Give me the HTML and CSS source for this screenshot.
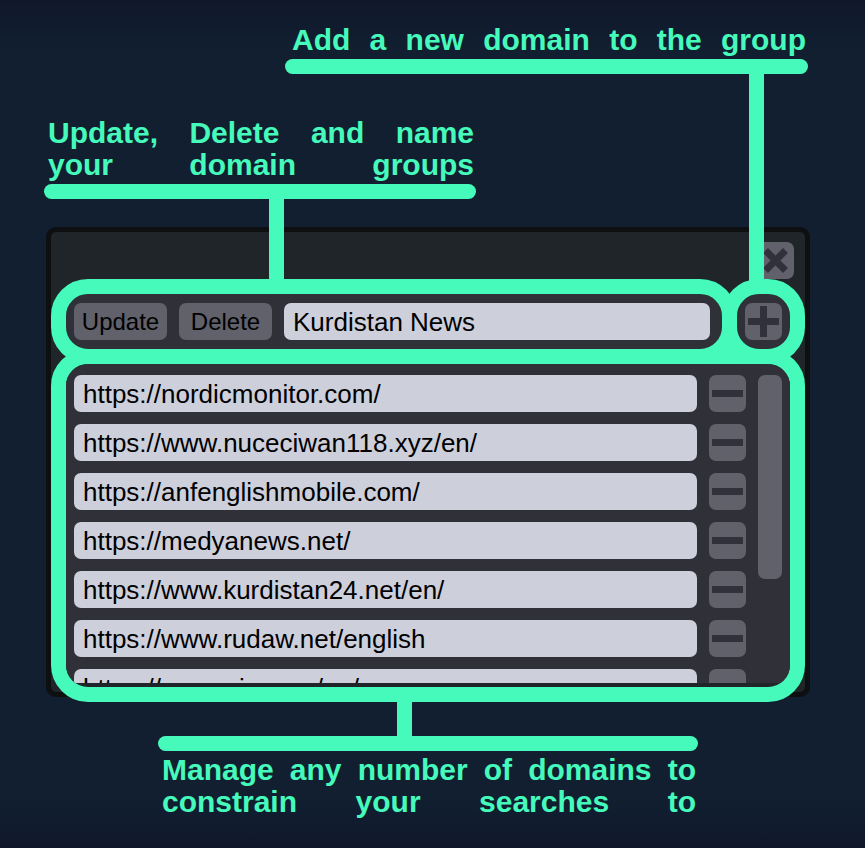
FILE: index.html
```html
<!DOCTYPE html>
<html lang="en">
<head>
<meta charset="utf-8">
<title>Domain groups</title>
<link rel="stylesheet" href="styles.css">
</head>
<body>
<main class="page">
  <section class="callout callout-add">
    <p class="callout-text">Add a new domain to the group</p>
    <div class="bar"></div>
  </section>
  <section class="callout callout-group">
    <p class="callout-text">Update, Delete and name<br>your domain groups</p>
    <div class="bar"></div>
  </section>

  <form class="panel">
    <header class="panel-head">
      <button class="icon-button" type="button" aria-label="Close"><svg viewBox="0 0 37 37"><path d="M8.500 8.500L28.500 28.500M28.500 8.500L8.500 28.500"/></svg></button>
    </header>
    <div class="group-row">
      <div class="ring group-controls">
        <button class="text-button" type="button">Update</button>
        <button class="text-button" type="button">Delete</button>
        <input class="field" type="text" aria-label="Group name" value="Kurdistan News">
      </div>
      <div class="ring add-control">
        <button class="icon-button" type="button" aria-label="Add domain"><svg viewBox="0 0 37 37"><path d="M3 18.500H34M18.500 3V34"/></svg></button>
      </div>
    </div>
    <div class="ring domains">
      <div class="scroller">
        <ul class="list">
          <li class="row"><input class="field" type="text" aria-label="Domain 1" value="https://nordicmonitor.com/"><button class="icon-button" type="button" aria-label="Remove domain 1"><svg viewBox="0 0 37 37"><path d="M3 18.500H34"/></svg></button></li>
          <li class="row"><input class="field" type="text" aria-label="Domain 2" value="https://www.nuceciwan118.xyz/en/"><button class="icon-button" type="button" aria-label="Remove domain 2"><svg viewBox="0 0 37 37"><path d="M3 18.500H34"/></svg></button></li>
          <li class="row"><input class="field" type="text" aria-label="Domain 3" value="https://anfenglishmobile.com/"><button class="icon-button" type="button" aria-label="Remove domain 3"><svg viewBox="0 0 37 37"><path d="M3 18.500H34"/></svg></button></li>
          <li class="row"><input class="field" type="text" aria-label="Domain 4" value="https://medyanews.net/"><button class="icon-button" type="button" aria-label="Remove domain 4"><svg viewBox="0 0 37 37"><path d="M3 18.500H34"/></svg></button></li>
          <li class="row"><input class="field" type="text" aria-label="Domain 5" value="https://www.kurdistan24.net/en/"><button class="icon-button" type="button" aria-label="Remove domain 5"><svg viewBox="0 0 37 37"><path d="M3 18.500H34"/></svg></button></li>
          <li class="row"><input class="field" type="text" aria-label="Domain 6" value="https://www.rudaw.net/english"><button class="icon-button" type="button" aria-label="Remove domain 6"><svg viewBox="0 0 37 37"><path d="M3 18.500H34"/></svg></button></li>
          <li class="row"><input class="field" type="text" aria-label="Domain 7" value="https://npasyria.com/en/"><button class="icon-button" type="button" aria-label="Remove domain 7"><svg viewBox="0 0 37 37"><path d="M3 18.500H34"/></svg></button></li>
        </ul>
        <div class="thumb"></div>
      </div>
    </div>
  </form>

  <section class="callout callout-domains">
    <div class="bar"></div>
    <p class="callout-text">Manage any number of domains to<br>constrain your searches to</p>
  </section>
</main>
</body>
</html>
```
FILE: styles.css
```css
:root {
  --accent: #45fabb;
  --surface: #303038;
  --panel: #1f2529;
  --control: #61616c;
  --glyph: #31313c;
  --field: #cdcfdb;
}

* { box-sizing: border-box; }

body {
  margin: 0;
  min-height: 100vh;
  font-family: "Liberation Sans", Arial, sans-serif;
  background:
    linear-gradient(#10172b, transparent 50px),
    linear-gradient(to top, #10172b, transparent 50px),
    #111f31;
}

.page {
  display: flex;
  flex-direction: column;
  padding: 24px 55px 24px 46px;
}

/* Callouts */
.callout {
  position: relative;
  z-index: 1;
  display: flex;
  flex-direction: column;
  gap: 3px;
}

.callout-text {
  margin: 0;
  padding: 0 2px 0 4px;
  color: var(--accent);
  font-size: 30px;
  font-weight: bold;
  line-height: 32px;
  text-align: justify;
  text-align-last: justify;
}

.bar {
  height: 15px;
  border-radius: 8px;
  background: var(--accent);
}

/* Stem joining a callout's bar to the ring it describes */
.callout::after {
  content: "";
  position: absolute;
  top: 100%;
  width: 15px;
  background: var(--accent);
}

.callout-add { margin: 0 2px 0 239px; }
.callout-add .callout-text { padding-left: 7px; }
.callout-add::after { right: 44px; height: 208px; }

.callout-group {
  width: 432px;
  margin: 43px 0 28px -2px;
}
.callout-group::after { left: 225px; height: 84px; }

.callout-domains {
  width: 540px;
  margin-top: 39px;
  align-self: center;
}
.callout-domains::after { top: auto; bottom: 100%; left: 239px; height: 36px; }

/* Panel */
.panel {
  margin: 0;
  border: 5px solid #0d0f11;
  border-radius: 10px;
  background: var(--panel);
}

.panel-head {
  display: flex;
  justify-content: flex-end;
  padding: 10px 11px 0;
}

.ring {
  border: 15px solid var(--accent);
  border-radius: 37px;
  background: var(--surface) padding-box;
}

.group-row { display: flex; }

.group-controls {
  flex: 1;
  display: flex;
  gap: 12px;
  padding: 9px 12px 9px 8px;
}

.add-control {
  margin-left: -15px;
  padding: 9px 8px;
}

.domains {
  margin: -15px 0 -10px;
  padding-bottom: 4px;
  overflow: hidden;
  background: var(--panel) padding-box;
}

.scroller {
  display: flex;
  gap: 12px;
  max-height: 319px;
  padding: 11px 8px 0;
  overflow: hidden;
  background: var(--surface);
}

.list {
  flex: 1;
  display: flex;
  flex-direction: column;
  gap: 12px;
  margin: 0;
  padding: 0;
  list-style: none;
}

.row { display: flex; gap: 12px; }

.thumb {
  width: 24px;
  height: 204px;
  border-radius: 7px;
  background: var(--control);
}

/* Controls */
.field,
.text-button,
.icon-button {
  display: block;
  height: 37px;
  margin: 0;
  border: 0;
  border-radius: 7px;
  color: #000;
  font-family: inherit;
}

.field {
  flex: 1;
  min-width: 0;
  padding: 2px 9px 0;
  background: var(--field);
  font-size: 26px;
}

.text-button {
  width: 93px;
  padding: 0;
  background: var(--control);
  font-size: 24px;
}

.icon-button {
  flex: none;
  width: 37px;
  padding: 0;
  background: var(--control);
}

.icon-button svg {
  display: block;
  width: 37px;
  height: 37px;
  fill: none;
  stroke: var(--glyph);
  stroke-width: 7;
}
```
